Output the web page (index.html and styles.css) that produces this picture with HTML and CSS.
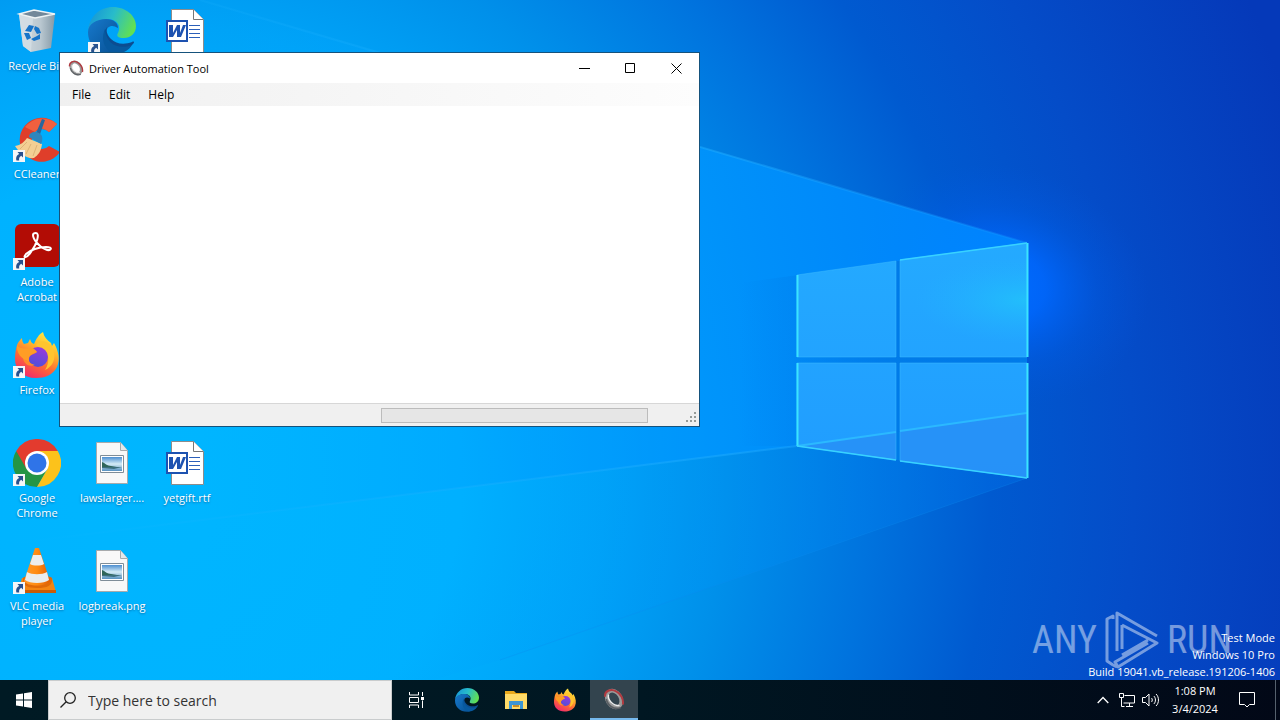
FILE: index.html
```
<!DOCTYPE html>
<html lang="en">
<head>
  <meta charset="UTF-8" />
  <meta name="viewport" content="width=device-width, initial-scale=1.0" />
  <title>Desktop</title>
  <link rel="stylesheet" href="styles.css">
</head>
<body>
  <!-- shared symbols -->
  <svg class="defs" width="0" height="0" aria-hidden="true">
    <defs>
      <linearGradient id="edgeTop" x1="0" y1="0.2" x2="1" y2="0.5"><stop offset="0" stop-color="#1593d8"/><stop offset=".5" stop-color="#28bcca"/><stop offset="1" stop-color="#62e052"/></linearGradient>
      <linearGradient id="edgeLow" x1="0" y1="0" x2="1" y2="1"><stop offset="0" stop-color="#1779cc"/><stop offset="1" stop-color="#075093"/></linearGradient>
      <linearGradient id="foxBody" x1=".8" y1="0" x2=".3" y2="1"><stop offset="0" stop-color="#fff04a"/><stop offset=".35" stop-color="#ffb82a"/><stop offset=".65" stop-color="#ff6a33"/><stop offset="1" stop-color="#f02a6c"/></linearGradient>
      <linearGradient id="foxGlobe" x1=".7" y1="0" x2=".3" y2="1"><stop offset="0" stop-color="#9a39dc"/><stop offset="1" stop-color="#4c50d8"/></linearGradient>
      <linearGradient id="binSide" x1="0" y1="0" x2="1" y2="0"><stop offset="0" stop-color="#d5dce0"/><stop offset=".6" stop-color="#b9c7d0"/><stop offset="1" stop-color="#8599a6"/></linearGradient>
      <linearGradient id="photo" x1="0" y1="0" x2="0" y2="1"><stop offset="0" stop-color="#4c8ed0"/><stop offset=".5" stop-color="#d5ecf6"/><stop offset="1" stop-color="#5590c0"/></linearGradient>
      <linearGradient id="cone" x1="0" y1="0" x2="1" y2="0"><stop offset="0" stop-color="#ff9a2a"/><stop offset=".5" stop-color="#ff8c12"/><stop offset="1" stop-color="#df5c04"/></linearGradient>

      <symbol id="shortcut" viewBox="0 0 12 12">
        <path d="M0 0h12v12H0z" fill="#f4f6f8"/>
        <path d="M4.500 2H10v5.500L8.200 5.800C6.300 7 5.800 8.500 6.200 10.500H3.500C2.500 7.500 3.800 5 6.200 3.900z" fill="#28518e"/>
      </symbol>

      <symbol id="edge" viewBox="0 0 48 48">
        <path d="M0 23C2 9 12 0 25 0c13 0 23 9 23 19 0 8-6 12-12 12-6 0-8-2-6-5 4-8-2-14-11-14C10 12 3 17 0 23z" fill="url(#edgeTop)"/>
        <path d="M0 25c0-8 9-13 18-13 8 0 12 4 12 9-6-4-11-2-12 4-1 9 4 17 12 22C13 50 0 40 0 25z" fill="url(#edgeLow)"/>
        <path d="M19 20c-5 6-4 17 5 22 7 4 15 2 21-5 2-2 1-3-1-2-8 3-16 2-21-3-4-4-5-8-4-12z" fill="#0c4c90"/>
        <path d="M17 22c-5 11 0 23 12 25 7-1 12-4 15-9-12 5-26 0-27-16z" fill="#07599f"/>
      </symbol>

      <symbol id="firefox" viewBox="0 0 48 48">
        <path d="M4 14C5 11 7 9 9 7c0 3 1 5 2 6l4-1 2-4c1 2 1 4 4 5 2-5 5-10 9-12 1 5 4 8 8 11l1 3 2-3c5 9 6 17 3 24-4 8-12 11-21 11C10 47 2 39 2 28 2 22 3 18 4 14z" fill="url(#foxBody)"/>
        <path d="M23 14c6-7 14-3 17 4 4 10-1 18-8 21 5-7 4-17-1-20-3-2-6-3-8-5z" fill="#ffc52e"/>
        <circle cx="25" cy="26" r="10" fill="url(#foxGlobe)"/>
        <path d="M13 19c5 0 8-1 11 2-4 3-7 2-8 6-1 4 2 6 6 7-7 3-13-3-12-10z" fill="#ff8a2c"/>
        <path d="M4 14c3 4 7 4 13 3 2-1 5 1 7 4-6 2-9 4-8 9-7-1-13-8-12-16z" fill="#ff9d25"/>
      </symbol>

      <symbol id="word" viewBox="0 0 48 48">
        <path d="M8.500 2.500h22l10 10v33h-32z" fill="#fff" stroke="#8c8c8c"/>
        <path d="M30.500 2.500v10h10" fill="#fff" stroke="#777"/>
        <path d="M26 18.500h11M26 22.500h11M26 26.500h11M26 30.500h11" stroke="#2b5fb9"/>
        <path d="M3 13h22v22H3z" fill="#1d52b0"/>
        <path d="M5 15h18v18H5z" fill="#fff"/>
        <path d="M6 18h4v8l4-8h3v8l3-8h3l-5 12h-4v-7l-4 7H6z" fill="#1d52b0"/>
      </symbol>

      <symbol id="picture" viewBox="0 0 48 48">
        <path d="M8.500 3.500h24l7 8v33h-31z" fill="#f8f8f8" stroke="#a7aaac"/>
        <path d="M32.500 3.500v8h7" fill="#e5e8ea" stroke="#a7aaac"/>
        <path d="M12.500 16.500h23v17h-23z" fill="#fff" stroke="#7f8d98"/>
        <path d="M14 18h20v14H14z" fill="url(#photo)"/>
        <path d="M14 23c3 1 5 4 9 4l6 1H14z" fill="#2f6659"/>
        <path d="M14 28h20l-8 2-12-1z" fill="#3b6f7d"/>
      </symbol>

      <symbol id="ring" viewBox="0 0 20 20">
        <ellipse cx="10" cy="10" rx="6" ry="8" transform="rotate(-32 10 10)" fill="none" stroke="#9a9a9a" stroke-width="3.400"/>
        <path d="M2 8C1 3 7 0 12 3c4 2 7 7 6 12" fill="none" stroke="#b03a40" stroke-width="1.800"/>
        <path d="M3 10c1 6 7 10 13 8" fill="none" stroke="#5b6065" stroke-width="1.500"/>
        <path d="M5 6c-1 5 4 10 10 10" fill="none" stroke="#ededed" stroke-width="1.300"/>
      </symbol>
    </defs>
  </svg>

  <main class="desktop">
    <svg class="wallpaper" viewBox="0 0 1280 720" preserveAspectRatio="xMidYMid slice" aria-hidden="true">
      <defs>
        <radialGradient id="sky" gradientUnits="userSpaceOnUse" cx="150" cy="480" r="1200">
          <stop offset="0" stop-color="#00b6ff"/><stop offset=".26" stop-color="#00b2ff"/><stop offset=".38" stop-color="#00a3f7"/><stop offset=".48" stop-color="#0090ea"/><stop offset=".6" stop-color="#0073de"/><stop offset=".7" stop-color="#005ad0"/><stop offset=".82" stop-color="#044cc8"/><stop offset="1" stop-color="#0539b9"/>
        </radialGradient>
        <radialGradient id="glow" gradientUnits="userSpaceOnUse" cx="0" cy="0" r="150" gradientTransform="translate(1000 285) rotate(12) scale(1 .8)"><stop offset="0" stop-color="#006cff"/><stop offset=".3" stop-color="#0068ff" stop-opacity=".85"/><stop offset=".65" stop-color="#0060f0" stop-opacity=".3"/><stop offset="1" stop-color="#0058e0" stop-opacity="0"/></radialGradient>
        <linearGradient id="beam" gradientUnits="userSpaceOnUse" x1="200" y1="0" x2="1030" y2="0"><stop offset="0" stop-color="#00a8ff" stop-opacity="0"/><stop offset=".6" stop-color="#0096ff" stop-opacity=".8"/><stop offset="1" stop-color="#0084ff" stop-opacity=".95"/></linearGradient>
        <linearGradient id="shade" gradientUnits="userSpaceOnUse" x1="740" y1="0" x2="900" y2="0"><stop offset="0" stop-color="#0078e4" stop-opacity="0"/><stop offset="1" stop-color="#0078e4" stop-opacity=".8"/></linearGradient>
        <linearGradient id="pane" x1="0" y1="0" x2="0" y2="1"><stop offset="0" stop-color="#24aaff"/><stop offset="1" stop-color="#209cff"/></linearGradient>
        <radialGradient id="shine" gradientUnits="userSpaceOnUse" cx="1025" cy="300" r="110" gradientTransform="translate(0 180) scale(1 .4)"><stop offset="0" stop-color="#22c4fa" stop-opacity=".8"/><stop offset="1" stop-color="#22b4ff" stop-opacity="0"/></radialGradient>
        <linearGradient id="ray" gradientUnits="userSpaceOnUse" x1="0" y1="0" x2="1030" y2="0"><stop offset="0" stop-color="#20b8ff" stop-opacity="0"/><stop offset=".7" stop-color="#20acff" stop-opacity=".5"/><stop offset="1" stop-color="#1494ff" stop-opacity=".3"/></linearGradient>
      </defs>
      <rect width="1280" height="720" fill="url(#sky)"/>
      <rect x="820" y="100" width="360" height="370" fill="url(#glow)"/>
      <path d="M0 545L797 446L1027 478L500 660L300 720H0z" fill="url(#beam)" opacity=".25"/>
      <path d="M200 0L1027 243V413L797 446L0 545V0z" fill="url(#beam)"/>
      <path d="M740 283L1027 243V413L797 446H740z" fill="url(#shade)"/>
      <path d="M797 446L1027 413V478z" fill="#007ce8"/>
      <path d="M200 0L1027 243M0 545L797 446" stroke="url(#ray)" stroke-width="2"/>
      <path d="M1027 478L500 660" stroke="#0c8cf0" opacity=".3"/>
      <path d="M797 275L896 261V357H797zM900 260L1027 243V357H900zM797 363H896V460L797 446zM900 363H1027V478L900 461z" fill="url(#pane)"/>
      <path d="M900 260L1027 243V357H900z" fill="url(#shine)"/>
      <path d="M797 446L896 432V460zM900 431L1027 413V478L900 461z" fill="#2a8cf4" opacity=".65"/>
      <path d="M797 446L896 432M900 431L1027 413" stroke="#2bb9ff" stroke-width="2"/>
      <path d="M797 275L896 261V357H797zM900 260L1027 243V357H900zM797 363H896V460L797 446zM900 363H1027V478L900 461z" fill="none" stroke="#3cbcff" opacity=".5"/>
      <path d="M797.500 275V357M797.500 363V446M1027.500 243V357M1027.500 363V478" stroke="#3ae4ff" stroke-width="2"/>
      <path d="M900 260L1027 243M797 446L896 460M900 461L1027 478" stroke="#38d2ff" stroke-width="1.500"/>
    </svg>

    <section class="icons">
      <button class="item">
        <svg class="pic" viewBox="0 0 48 48"><path d="M6 7l15-4 21 4-4 34-20 4-8-6z" fill="url(#binSide)"/><path d="M6 7l14 4-2 34-8-6z" fill="#d3dde3" opacity=".9"/><path d="M6 7l15-4 21 4-20 4z" fill="#72889a" stroke="#eef3f5" stroke-width="1.300"/><path d="M12 24l4-6 5 1-3 6zM22 19l4 2 2 5-4 1-3-5zM11 26h5l2 5-4 2zM18 32l6-3 3-2v5l-6 2z" fill="#1674c9"/></svg>
        <span>Recycle Bin</span>
      </button>
      <button class="item">
        <svg class="pic" viewBox="0 0 48 48"><path d="M44 9A22 22 0 1 0 47 37L36 31A10 10 0 1 1 36 17z" fill="#df3e2a"/><path d="M44 9A22 22 0 0 0 12 12l10 5c4-5 9-4 14 0z" fill="#f0603f"/><path d="M29 4l3 1-6 17-5 1z" fill="#27679e"/><path d="M14 23l15 6c-1 8-4 11-8 14-7 1-14-4-19-12 6-1 9-4 12-8z" fill="#f3cf93"/><path d="M16 22c0-5 6-6 10-4 4 2 4 7 2 11z" fill="#2f86bd"/><path d="M14 27L7 34M18 29l-5 10M24 30l-4 11" stroke="#dcb478"/><use href="#shortcut" x="0" y="35" width="12" height="12"/></svg>
        <span>CCleaner</span>
      </button>
      <button class="item">
        <svg class="pic" viewBox="0 0 48 48"><rect x="2" y="1" width="45" height="43" rx="6" fill="#b20c05"/><path d="M23 10c4 0 1 11-5 19-4 6-9 7-5 2 4-4 13-7 20-7 8 0 5 5-1 2-6-2-12-10-12-14 0-1 1-2 3-2z" fill="none" stroke="#fff" stroke-width="2"/><use href="#shortcut" x="0" y="35" width="12" height="12"/></svg>
        <span>Adobe Acrobat</span>
      </button>
      <button class="item">
        <svg class="pic" viewBox="0 0 48 48"><use href="#firefox"/><use href="#shortcut" x="0" y="35" width="12" height="12"/></svg>
        <span>Firefox</span>
      </button>
      <button class="item">
        <svg class="pic" viewBox="0 0 48 48"><path d="M3.200 12A24 24 0 0 1 44.800 12H24z" fill="#e33b2e"/><path d="M3.200 12A24 24 0 0 0 24 48L34.400 30H24z" fill="#249545"/><path d="M44.800 12A24 24 0 0 1 24 48L34.400 30 24 12z" fill="#fcc21b"/><path d="M3.200 12l10.400 18L24 12z" fill="#e33b2e"/><circle cx="24" cy="24" r="12" fill="#fff"/><circle cx="24" cy="24" r="9.500" fill="#2f74e8"/><use href="#shortcut" x="0" y="35" width="12" height="12"/></svg>
        <span>Google Chrome</span>
      </button>
      <button class="item">
        <svg class="pic" viewBox="0 0 48 48"><path d="M9 31h30l4 14H5z" fill="#f48512"/><path d="M5 43h38v3H5z" fill="#c95c08"/><path d="M10 31c0-3 28-3 29 0 1 8-5 10-15 10S9 38 10 31z" fill="#e06a08"/><path d="M22 1h4l11 33c-3 6-23 6-26 0z" fill="url(#cone)"/><path d="M20 8h8l3 9c-3 2-11 2-14 0z" fill="#eceeee"/><path d="M14 25c5 3 15 3 20 0l2 8c-5 4-19 4-24 0z" fill="#e9eded"/><use href="#shortcut" x="0" y="35" width="12" height="12"/></svg>
        <span>VLC media player</span>
      </button>
      <button class="item second-col" aria-label="Edge">
        <svg class="pic" viewBox="0 0 48 48"><use href="#edge"/><use href="#shortcut" x="0" y="35" width="12" height="12"/></svg>
      </button>
      <button class="item second-col fifth-row">
        <svg class="pic"><use href="#picture"/></svg>
        <span>lawslarger....</span>
      </button>
      <button class="item second-col sixth-row">
        <svg class="pic"><use href="#picture"/></svg>
        <span>logbreak.png</span>
      </button>
      <button class="item third-col" aria-label="Document">
        <svg class="pic"><use href="#word"/></svg>
      </button>
      <button class="item third-col fifth-row">
        <svg class="pic"><use href="#word"/></svg>
        <span>yetgift.rtf</span>
      </button>
    </section>

    <div class="anyrun">
      <span>ANY</span>
      <svg width="56" height="60" viewBox="0 0 56 60" aria-hidden="true"><path d="M9 9V6L3 9v42l6 4M53 26L13 3v38M18 15v24M18 15l35 18L14 57l-3-5 33-19M18 45l26-15M9 55l4 2" fill="none" stroke="#fff" stroke-width="3" stroke-linejoin="round"/></svg>
      <span>RUN</span>
    </div>

    <div class="build">
      <p>Test Mode</p>
      <p>Windows 10 Pro</p>
      <p>Build 19041.vb_release.191206-1406</p>
    </div>

    <section class="window">
      <header class="titlebar">
        <svg class="app-icon" width="16" height="16"><use href="#ring"/></svg>
        <h1>Driver Automation Tool</h1>
        <button aria-label="Minimize"><svg width="11" height="11"><path d="M0 5.500h11" stroke="#000"/></svg></button>
        <button aria-label="Maximize"><svg width="11" height="11"><path d="M.5.5h9v9h-9z" fill="none" stroke="#000"/></svg></button>
        <button aria-label="Close"><svg width="11" height="11"><path d="M.5.5l10 10M10.500.5l-10 10" stroke="#000"/></svg></button>
      </header>
      <nav class="menu">
        <button>File</button>
        <button>Edit</button>
        <button>Help</button>
      </nav>
      <div class="client"></div>
      <footer class="status">
        <progress value="0" max="100" aria-label="Progress"></progress>
        <svg class="grip" width="11" height="11"><path d="M8 0h2v2H8zM4 4h2v2H4zM8 4h2v2H8zM0 8h2v2H0zM4 8h2v2H4zM8 8h2v2H8z" fill="#969b98"/></svg>
      </footer>
    </section>
  </main>

  <footer class="taskbar">
    <button class="start" aria-label="Start"><svg width="16" height="16"><path d="M0 2.500L7 1.500V7.500H0zM8 1.300L16 0V7.500H8zM0 8.500H7V14.500L0 13.500zM8 8.500H16V16L8 14.700z" fill="#fff"/></svg></button>
    <label class="search">
      <svg width="18" height="18" viewBox="0 0 18 18"><circle cx="10" cy="7" r="5.300" fill="none" stroke="#222" stroke-width="1.300"/><path d="M6.200 10.800L.5 16.500" stroke="#222" stroke-width="1.300"/></svg>
      <input type="text" placeholder="Type here to search" aria-label="Search">
    </label>
    <button class="task-view" aria-label="Task View"><svg width="17" height="16" fill="none" stroke="#fff"><path d="M1.500 0v3h9V0M1.500 16v-3h9v3M1.500 5.500h9v5h-9zM14.500 0v4M14.500 8.500V16"/><path d="M13 5h3v3h-3z" fill="#fff" stroke="none"/></svg></button>
    <div class="apps">
      <button aria-label="Edge"><svg width="24" height="24"><use href="#edge"/></svg></button>
      <button aria-label="File Explorer"><svg width="22" height="20" viewBox="0 0 22 20"><path d="M0 1h9l2 2h11v16H0z" fill="#e9a91c"/><path d="M0 4h22v15H0z" fill="#ffdb68"/><path d="M4 11h14v8h-3v-4H7v4H4z" fill="#3c96d2"/><path d="M8 15h6v2H8z" fill="#c68e25"/></svg></button>
      <button aria-label="Firefox"><svg width="24" height="24"><use href="#firefox"/></svg></button>
      <button class="active" aria-label="Driver Automation Tool"><svg width="22" height="22"><use href="#ring"/></svg></button>
    </div>
    <div class="tray">
      <button aria-label="Show hidden icons"><svg width="12" height="8"><path d="M.7 7L6 1.500 11.300 7" fill="none" stroke="#fff" stroke-width="1.300"/></svg></button>
      <button aria-label="Network"><svg width="17" height="14" fill="none" stroke="#fff"><path d="M5.500 2.500h10v7.500H4.500M10.500 10v3M7 13.500h7M.5.500h4v4h-4zM2.500 4.500v9h3"/></svg></button>
      <button aria-label="Volume"><svg width="18" height="14" viewBox="0 0 18 14" fill="none" stroke="#fff"><path d="M.5 4.500h3L7 1v12L3.500 9.500h-3zM9.500 5c1 1 1 3 0 4M11.800 3c2.200 2 2.200 6 0 8M14 1c3.300 3 3.300 9 0 12"/></svg></button>
      <button class="clock"><span>1:08 PM</span><span>3/4/2024</span></button>
      <button class="notify" aria-label="Notifications"><svg width="16" height="16"><path d="M.5.500h15v12h-5L8 15l-2.500-2.500h-5z" fill="none" stroke="#fff"/></svg></button>
      <button class="peek" aria-label="Show desktop"></button>
    </div>
  </footer>
</body>
</html>
```

FILE: styles.css
```
* {
  box-sizing: border-box;
}
body {
  margin: 0;
  height: 100vh;
  display: flex;
  flex-direction: column;
  overflow: hidden;
  font-family: "Open Sans", "Noto Sans", sans-serif;
  font-size: 11px;
  color: #fff;
}
button {
  display: flex;
  align-items: center;
  justify-content: center;
  padding: 0;
  border: none;
  background: none;
  font: inherit;
  color: inherit;
}
svg {
  display: block;
  flex-shrink: 0;
}
.defs {
  position: absolute;
}

/* desktop */
.desktop {
  flex: 1;
  position: relative;
  min-height: 0;
  overflow: hidden;
}
.wallpaper {
  position: absolute;
  top: 0;
  left: 0;
  width: 100vw;
  height: 100vh;
}
.icons {
  position: relative;
  display: grid;
  grid-template-columns: repeat(3, 74px);
  grid-template-rows: repeat(6, 108px);
  grid-auto-flow: column;
  column-gap: 1px;
  padding-top: 7px;
}
.item {
  flex-direction: column;
  justify-content: flex-start;
  line-height: 15px;
  text-shadow: 0 1px 2px rgba(0, 40, 90, 0.5);
}
.item span {
  max-width: 68px;
}
.pic {
  width: 48px;
  height: 48px;
  margin-bottom: 3px;
}
.second-col {
  grid-column: 2;
}
.third-col {
  grid-column: 3;
}
.fifth-row {
  grid-row: 5;
}
.sixth-row {
  grid-row: 6;
}
.anyrun {
  position: absolute;
  right: 48px;
  bottom: 10px;
  display: flex;
  align-items: center;
  gap: 7px;
  opacity: 0.45;
  font-family: "Roboto Condensed", Roboto, sans-serif;
  font-size: 38px;
  line-height: 60px;
}
.build {
  position: absolute;
  right: 5px;
  bottom: 0;
  text-align: right;
  line-height: 17px;
}
.build p {
  margin: 0;
}

/* application window */
.window {
  position: absolute;
  left: 59px;
  top: 52px;
  width: 641px;
  height: 375px;
  display: flex;
  flex-direction: column;
  border: 1px solid #15527c;
  background: #fff;
  color: #000;
}
.titlebar {
  display: flex;
  height: 30px;
  padding-left: 8px;
  align-items: center;
}
.titlebar h1 {
  flex: 1;
  margin: 0 0 0 5px;
  font-size: 11px;
  font-weight: normal;
}
.titlebar button {
  width: 46px;
  height: 28px;
}
.menu {
  display: flex;
  height: 23px;
  padding-left: 3px;
  background: linear-gradient(90deg, #f0f0f0, #fdfdfd);
}
.menu button {
  padding: 0 9px;
  font-size: 12px;
}
.client {
  flex: 1;
}
.status {
  display: flex;
  align-items: center;
  justify-content: flex-end;
  gap: 38px;
  height: 23px;
  padding-right: 2px;
  border-top: 1px solid #d7d7d7;
  background: #f0f0f0;
}
progress {
  appearance: none;
  width: 267px;
  height: 15px;
  border: 1px solid #bcbcbc;
  background: #e6e6e6;
}
progress::-webkit-progress-bar {
  background: #e6e6e6;
}
.grip {
  align-self: flex-end;
  margin-bottom: 3px;
}

/* taskbar */
.taskbar {
  position: relative;
  display: flex;
  height: 40px;
  background: linear-gradient(90deg, #001a24, #001722 50%, #020817);
}
.start,
.task-view {
  width: 48px;
}
.search {
  display: flex;
  align-items: center;
  width: 344px;
  padding-left: 11px;
  gap: 10px;
  border: 1px solid #c9cccd;
  background: #f0f0f0;
}
.search input {
  flex: 1;
  min-width: 0;
  padding: 0;
  border: none;
  outline: none;
  background: none;
  font: inherit;
  font-size: 14px;
}
.search input::placeholder {
  color: #333;
  opacity: 1;
}
.apps {
  display: flex;
  gap: 1px;
  margin-left: 3px;
}
.apps button {
  width: 48px;
}
.apps .active {
  background: #33444e;
  border-bottom: 2px solid #76b9ed;
}
.tray {
  display: flex;
  margin-left: auto;
}
.tray button {
  width: 24px;
}
.tray .clock {
  flex-direction: column;
  width: 64px;
  line-height: 18px;
}
.tray .notify {
  width: 40px;
}
.tray .peek {
  width: 5px;
  margin-left: 8px;
  border-left: 1px solid #56616d;
}
```
